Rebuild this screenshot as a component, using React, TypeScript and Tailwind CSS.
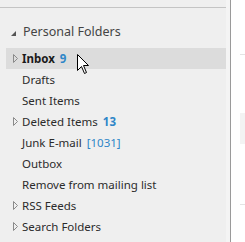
import React from "react";

type Folder = {
  name: string;
  count?: string;
  countStyle?: "bold" | "bracket";
  expandable?: boolean;
  selected?: boolean;
  bold?: boolean;
};

const FOLDERS: Folder[] = [
  { name: "Inbox", count: "9", countStyle: "bold", expandable: true, selected: true, bold: true },
  { name: "Drafts" },
  { name: "Sent Items" },
  { name: "Deleted Items", count: "13", countStyle: "bold", expandable: true },
  { name: "Junk E-mail", count: "[1031]", countStyle: "bracket" },
  { name: "Outbox" },
  { name: "Remove from mailing list" },
  { name: "RSS Feeds", expandable: true },
  { name: "Search Folders", expandable: true },
];

function Caret() {
  return (
    <svg width="5" height="9" viewBox="0 0 5 9" className="shrink-0">
      <path d="M0.5 0.5 L4.5 4.5 L0.5 8.5 Z" fill="none" stroke="#8a8a8a" strokeWidth="1" />
    </svg>
  );
}

function Cursor() {
  return (
    <svg
      width="13"
      height="21"
      viewBox="0 0 13 21"
      className="absolute left-[77px] top-[54px]"
    >
      <path
        d="M0.5 0.5 L0.5 16.5 L4.5 12.5 L7.5 19.5 L9.5 18.5 L6.5 11.5 L11.5 11.5 Z"
        fill="#ffffff"
        stroke="#000000"
        strokeWidth="1"
        strokeLinejoin="round"
      />
    </svg>
  );
}

export default function App() {
  return (
    <div className="relative flex h-[242px] w-[245px] overflow-hidden bg-white font-['Noto_Sans','Segoe_UI',sans-serif] text-[11.5px] text-[#2b2b2b]">
      <div className="flex w-[231px] shrink-0 border-r border-[#9a9a9a] bg-[#efefef]">
        <div className="w-[226px]">
          <div className="h-[7px]" />
          <div className="h-px bg-[#c4c4c4]" />
          <div className="mt-[14px] flex h-[20px] items-center pl-[11px] text-[12.5px] text-[#444444]">
            <svg width="5" height="5" viewBox="0 0 5 5" className="mr-[7px] mt-[2px] shrink-0">
              <path d="M5 0 L5 5 L0 5 Z" fill="#555555" />
            </svg>
            Personal Folders
          </div>
          <div className="mt-[6px]">
            {FOLDERS.map((f) => (
              <div
                key={f.name}
                className={`ml-[6px] flex h-[21px] items-center ${f.selected ? "bg-[#dcdcdc]" : ""}`}
              >
                <div className="flex w-[16px] justify-center pl-[2px]">
                  {f.expandable && <Caret />}
                </div>
                <span className={f.bold ? "font-bold text-[#1a1a1a]" : ""}>{f.name}</span>
                {f.count && (
                  <span
                    className={`ml-[5px] text-[#2e86c8] ${f.countStyle === "bold" ? "font-bold" : ""}`}
                  >
                    {f.count}
                  </span>
                )}
              </div>
            ))}
          </div>
        </div>
        <div className="w-[4px] bg-[#f4f4f4]" />
      </div>
      <div className="flex-1">
        <div className="ml-[9px] mt-[54px] h-px bg-[#e4e4e4]" />
        <div className="ml-[9px] mt-[58px] h-[31px] bg-[#f3f3f3]" />
        <div className="ml-[9px] mt-[60px] h-px bg-[#e4e4e4]" />
      </div>
      <Cursor />
    </div>
  );
}
